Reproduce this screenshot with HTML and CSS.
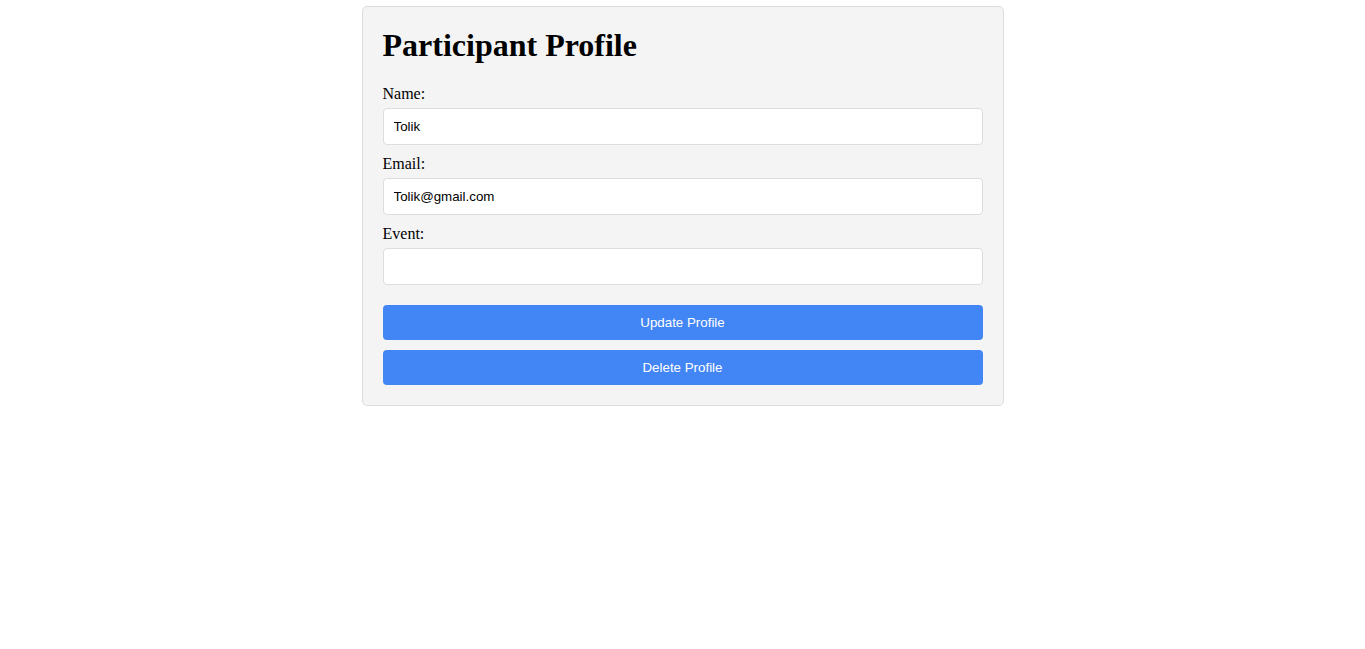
FILE: index.html
```html
<!DOCTYPE html>
<html>
<head>
<meta charset="utf-8">
<title>Participant Profile</title>
<link rel="stylesheet" href="styles.css">
</head>
<body>
<div class="card">
  <h1 class="title">Participant Profile</h1>
  <form class="form">
    <label class="label" for="name">Name:</label>
    <input class="field" id="name" type="text" value="Tolik">
    <label class="label" for="email">Email:</label>
    <input class="field" id="email" type="email" value="Tolik@gmail.com">
    <label class="label" for="event">Event:</label>
    <input class="field" id="event" type="text" value="">
    <button class="btn" type="button">Update Profile</button>
    <button class="btn" type="button">Delete Profile</button>
  </form>
</div>
</body>
</html>
```

FILE: styles.css
```css
body {
  margin: 0;
  font-family: "Liberation Serif", "Times New Roman", serif;
  font-size: 16px;
  color: #000;
  background: #fff;
}

.card {
  box-sizing: content-box;
  width: 600px;
  margin: 6px auto 0;
  padding: 20px;
  background: #f4f4f4;
  border: 1px solid #ddd;
  border-radius: 5px;
}

.title {
  margin: 0 0 21px;
  font-size: 32px;
  font-weight: bold;
  line-height: 37px;
}

.form {
  display: flex;
  flex-direction: column;
}

.label {
  display: block;
  margin-bottom: 5px;
  line-height: 18px;
}

.field {
  box-sizing: border-box;
  width: 100%;
  height: 37px;
  margin: 0 0 10px;
  padding: 10px;
  border: 1px solid #ddd;
  border-radius: 4px;
  background: #fff;
  font-family: "Liberation Sans", Arial, sans-serif;
  font-size: 13.33px;
  color: #000;
}

.btn {
  width: 100%;
  height: 35px;
  margin: 10px 0 0;
  padding: 0;
  border: none;
  border-radius: 4px;
  background: #4285f4;
  color: #fff;
  font-family: "Liberation Sans", Arial, sans-serif;
  font-size: 13.33px;
  cursor: pointer;
}
```
